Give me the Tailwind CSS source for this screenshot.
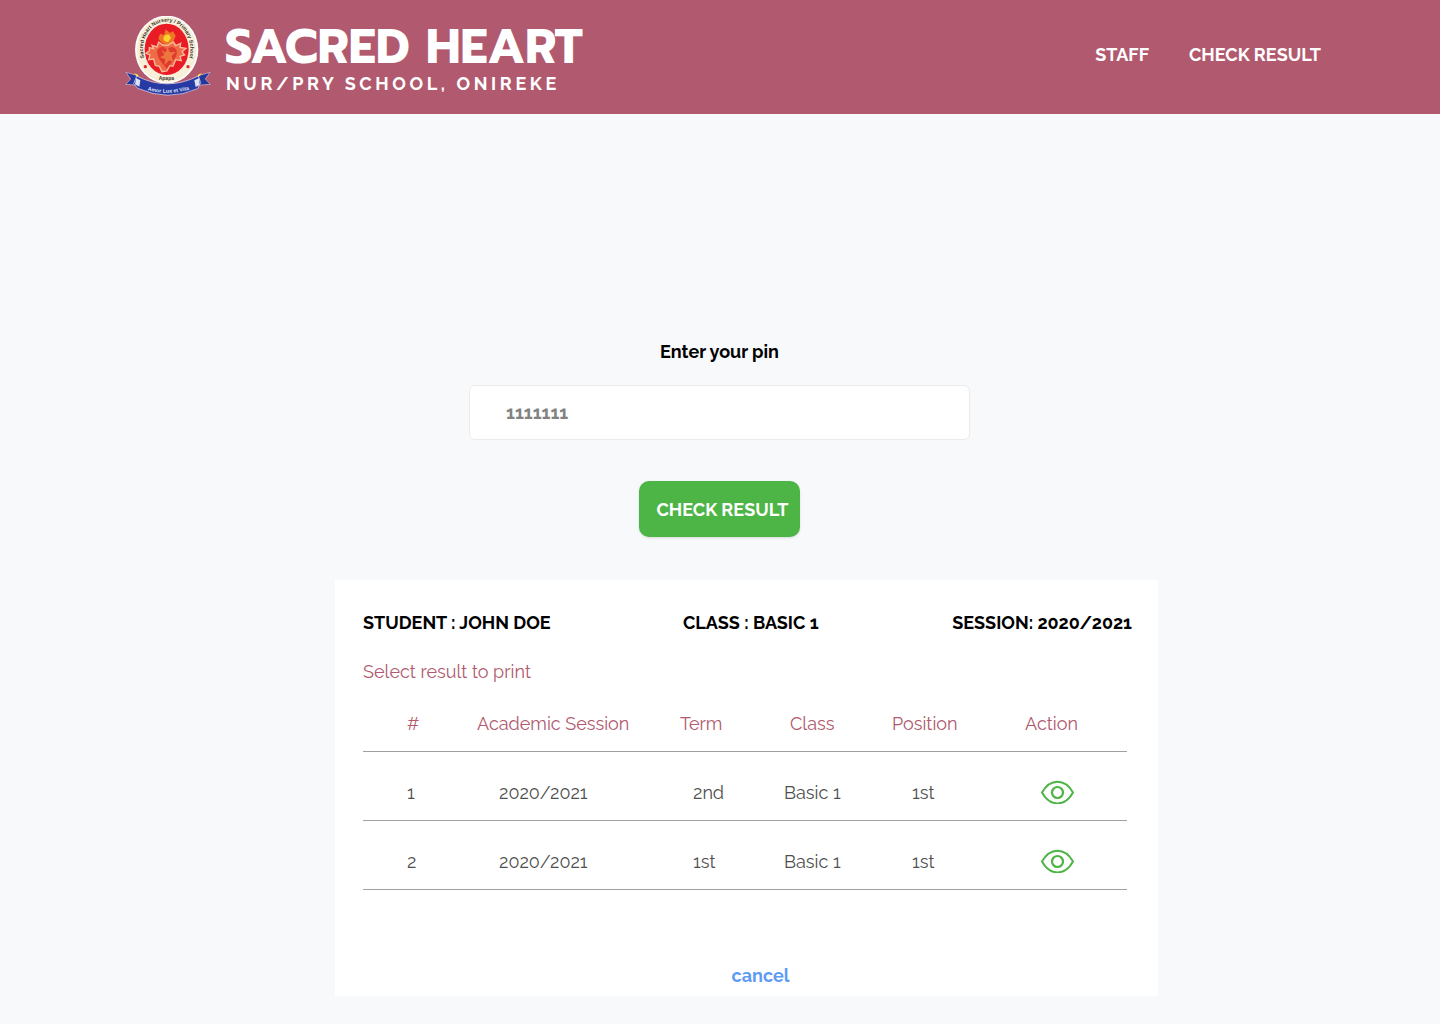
<!DOCTYPE html>
<html lang="en">
<head>
<meta charset="utf-8">
<meta name="viewport" content="width=device-width, initial-scale=1">
<title>Sacred Heart - Check Result</title>
<script src="https://cdn.jsdelivr.net/npm/@tailwindcss/browser@4"></script>
</head>
<body class="min-h-screen bg-[#f8f9fb] font-[Raleway,Lato,sans-serif] text-lg leading-6 text-black oldstyle-nums proportional-nums">
<header class="flex min-h-[114px] items-center justify-between gap-8 bg-[#b1596e] pr-[119px] pl-[125px] text-white">
  <a href="#" class="flex items-start gap-[14px]">
    <svg class="h-[83px] w-[86px] shrink-0" viewBox="30 30 258 249" role="img" aria-label="School crest">
      <defs>
        <path id="arc" d="M92 168 A71 83 0 1 1 218 168"/>
        <path id="motto" d="M85 249 Q160 273 235 247"/>
      </defs>
      <ellipse cx="155" cy="131" rx="95" ry="102" fill="#fff"/>
      <ellipse cx="155" cy="131" rx="90" ry="98" fill="#f8efd9"/>
      <ellipse cx="155" cy="130" rx="66" ry="77" fill="#e91c25"/>
      <path d="M143 112 130 99l5-16 12 4 5-17 13 11 9-5 8 13-6 15 7 11-15 8z" fill="#ef7527"/>
      <path d="M145 98q2-14 18-12l5 10-9 13-10-4z" fill="#f8d22e"/>
      <path d="M103 125l13 3-5-10 15 5 5-15 13 9 15 1 15-10 8 11 15-7-2 12 18 3-12 10 8 10-14 4 4 13-17-3-8 20-10-2-8 16-15 2-8-16-12-3-5-19-15 2 4-14-12-5 10-8z" fill="#ee6b45" stroke="#f9bb9c" stroke-width="4"/>
      <path d="M128 130q14-15 27 0 19-15 29 1 6 18-13 36l-16 21-20-25q-12-20-7-33" fill="#df3a2d"/>
      <path d="M140 132l8 15-13 7 16 6-2 17 13-14 12 4-4-17 12-12-17 1-7-13-7 14z" fill="#ef7540"/>
      <circle cx="91" cy="182" r="5" fill="#e12a2a"/><circle cx="219" cy="182" r="5" fill="#e12a2a"/>
      <text text-anchor="middle" class="font-[Liberation_Sans,sans-serif] text-[16px] font-bold" fill="#39342f"><textPath href="#arc" startOffset="50%">Sacred Heart Nursery / Primary School</textPath></text>
      <text x="154" y="222" text-anchor="middle" class="font-[Liberation_Sans,sans-serif] text-[15px] font-bold" fill="#39342f">Apapa</text>
      <path d="M33 199l38 11v28l-39-3 15-16zM285 199l-38 11v28l39-3-15-16z" fill="#24379b" stroke="#dcbdd2" stroke-width="2"/>
      <path d="M57 201l12 5v9zM261 201l-12 5v9z" fill="#fcef2f"/>
      <path d="M65 210Q157 257 250 210l7 20-9 18Q160 288 68 247l-12-14z" fill="#2739a2" stroke="#f3e6ee" stroke-width="2"/>
      <path d="M63 216l13 7-3 19-13-7zM253 216l-15 7 4 20 12-6z" fill="#dce1f5"/>
      <text text-anchor="middle" class="font-[Liberation_Sans,sans-serif] text-[16px] font-bold" fill="#dfe3fa"><textPath href="#motto" startOffset="50%">Amor Lux et Vita</textPath></text>
    </svg>
    <span class="flex flex-col pt-[7px]">
      <span class="font-[Prompt,Inter,sans-serif] text-5xl leading-[48px] font-bold">SACRED HEART</span>
      <span class="pt-px pl-px text-lg leading-6 font-bold tracking-[0.2em]">NUR/PRY SCHOOL, ONIREKE</span>
    </span>
  </a>
  <nav class="flex gap-10 pb-1 font-bold">
    <a href="#">STAFF</a>
    <a href="#">CHECK RESULT</a>
  </nav>
</header>
<main class="flex flex-col items-center pb-7">
  <form class="flex w-full flex-col items-center pt-[226px] pr-px">
    <label for="pin" class="font-bold">Enter your pin</label>
    <input id="pin" type="text" placeholder="1111111" class="mt-[21px] h-[55px] w-full max-w-[501px] rounded-md border border-[#ebebeb] bg-white px-9 font-bold placeholder:text-[#828282]">
    <button type="button" class="mt-[41px] h-14 w-[161px] rounded-[10px] bg-[#4cb545] pt-0.5 pl-1.5 font-bold whitespace-nowrap text-white shadow">CHECK RESULT</button>
  </form>
  <div class="mt-[43px] w-full max-w-[876px] pl-[53px]">
    <section class="bg-white pt-[31px] pr-[26px] pb-2 pl-7">
      <div class="flex justify-between font-bold">
        <p class="w-80">STUDENT : JOHN DOE</p>
        <p class="flex-1">CLASS : BASIC 1</p>
        <p>SESSION: 2020/2021</p>
      </div>
      <p class="mt-[25px] text-[#b1596e]">Select result to print</p>
      <table class="w-full max-w-[764px] table-fixed text-left text-[#4f4f4f]">
        <colgroup><col class="w-[114px]"><col class="w-[203px]"><col class="w-[104px]"><col class="w-[108px]"><col class="w-[133px]"><col></colgroup>
        <thead class="text-[#b1596e]">
          <tr class="border-b border-[#a0a0a0]">
            <th class="pt-7 pb-[15px] pl-11 font-normal">#</th>
            <th class="pt-7 pb-[15px] font-normal">Academic Session</th>
            <th class="pt-7 pb-[15px] font-normal">Term</th>
            <th class="pt-7 pb-[15px] pl-1.5 font-normal">Class</th>
            <th class="pt-7 pb-[15px] font-normal">Position</th>
            <th class="pt-7 pb-[15px] font-normal">Action</th>
          </tr>
        </thead>
        <tbody>
          <tr class="border-b border-[#a0a0a0]">
            <td class="pt-[29px] pb-[15px] pl-11">1</td>
            <td class="pt-[29px] pb-[15px] pl-[22px]">2020/2021</td>
            <td class="pt-[29px] pb-[15px] pl-[13px]">2nd</td>
            <td class="pt-[29px] pb-[15px]">Basic 1</td>
            <td class="pt-[29px] pb-[15px] pl-5">1st</td>
            <td class="pt-7 pb-4 pl-4"><button type="button" aria-label="View result" class="block"><svg class="h-6 w-[33px]" viewBox="0 0 33 24" fill="none" stroke="#4cb545" stroke-width="2"><path d="M1 12.500C9-2 24-2 32 12.500C24 27 9 27 1 12.500Z" stroke-linejoin="round"/><circle cx="16.500" cy="12.500" r="5.500" stroke-width="2.200"/></svg></button></td>
          </tr>
          <tr class="border-b border-[#a0a0a0]">
            <td class="pt-[29px] pb-[15px] pl-11">2</td>
            <td class="pt-[29px] pb-[15px] pl-[22px]">2020/2021</td>
            <td class="pt-[29px] pb-[15px] pl-[13px]">1st</td>
            <td class="pt-[29px] pb-[15px]">Basic 1</td>
            <td class="pt-[29px] pb-[15px] pl-5">1st</td>
            <td class="pt-7 pb-4 pl-4"><button type="button" aria-label="View result" class="block"><svg class="h-6 w-[33px]" viewBox="0 0 33 24" fill="none" stroke="#4cb545" stroke-width="2"><path d="M1 12.500C9-2 24-2 32 12.500C24 27 9 27 1 12.500Z" stroke-linejoin="round"/><circle cx="16.500" cy="12.500" r="5.500" stroke-width="2.200"/></svg></button></td>
          </tr>
        </tbody>
      </table>
      <div class="mt-[74px] flex justify-center pl-[26px]"><a href="#" class="font-bold text-[#5d9bf5]">cancel</a></div>
    </section>
  </div>
</main>
</body>
</html>
